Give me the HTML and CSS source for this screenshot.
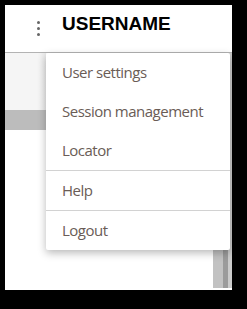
FILE: index.html
```html
<!DOCTYPE html>
<html lang="en">
<head>
    <meta charset="UTF-8">
    <title>User menu</title>
    <link rel="stylesheet" href="styles.css">
</head>
<body>
<div class="frame">
    <div class="header">
        <svg class="dots" width="3" height="15" viewBox="0 0 3 15">
            <circle cx="1.5" cy="1.5" r="1.5"/>
            <circle cx="1.5" cy="7.5" r="1.5"/>
            <circle cx="1.5" cy="13.5" r="1.5"/>
        </svg>
        <span class="username">USERNAME</span>
    </div>
    <div class="main">
        <div class="side">
            <div class="side-top"></div>
            <div class="side-bar"></div>
        </div>
        <div class="content"></div>
        <div class="scroll">
            <div class="track a"></div>
            <div class="track b"></div>
            <div class="track c"></div>
        </div>
    </div>

    <ul class="menu">
        <li class="item">User settings</li>
        <li class="item">Session management</li>
        <li class="item">Locator</li>
        <li class="divider"></li>
        <li class="item">Help</li>
        <li class="divider"></li>
        <li class="item">Logout</li>
    </ul>
</div>
</body>
</html>
```

FILE: styles.css
```css
html, body {
    margin: 0;
    padding: 0;
    background-color: #000;
}

body {
    padding: 5px;
    height: 309px;
    box-sizing: border-box;
}

.frame {
    position: relative;
    width: 227px;
    height: 285px;
    background-color: #fff;
    display: flex;
    flex-direction: column;
}

.header {
    border-bottom: 1px solid #b3b3b3;
    display: flex;
    align-items: flex-start;
    padding: 8px 0 0 32px;
    height: 39px;
}

.dots {
    fill: #666;
    margin-top: 8px;
}

.username {
    margin-left: 22px;
    font-family: "Liberation Sans", Arial, sans-serif;
    font-weight: bold;
    font-size: 19px;
    line-height: 22px;
    color: #000;
}

.main {
    flex: 1;
    display: flex;
}

.side {
    width: 41px;
    display: flex;
    flex-direction: column;
}

.side-top {
    height: 57px;
    background: linear-gradient(to right, #f5f5f5 80%, #ececec);
}

.side-bar {
    height: 20px;
    background-color: #bcbcbc;
}

.content {
    flex: 1;
}

.scroll {
    width: 19px;
    display: flex;
    padding-bottom: 2px;
}

.track.a {
    width: 10px;
    background-color: #c2c2c2;
}

.track.b {
    width: 5px;
    background-color: #9b9b9b;
}

.track.c {
    width: 4px;
    background-color: #cbcbcb;
}

.menu {
    position: absolute;
    left: 41px;
    top: 48px;
    width: 184px;
    margin: 0;
    padding: 0;
    list-style: none;
    background-color: #fff;
    box-shadow: 0 3px 8px rgba(0, 0, 0, 0.28);
    border-radius: 2px;
}

.item {
    height: 39px;
    line-height: 38px;
    padding-left: 16px;
    font-family: "Open Sans", sans-serif;
    font-size: 15px;
    letter-spacing: -0.5px;
    color: #6a5c56;
}

.divider {
    height: 1px;
    background-color: #d2d2d2;
}
```
